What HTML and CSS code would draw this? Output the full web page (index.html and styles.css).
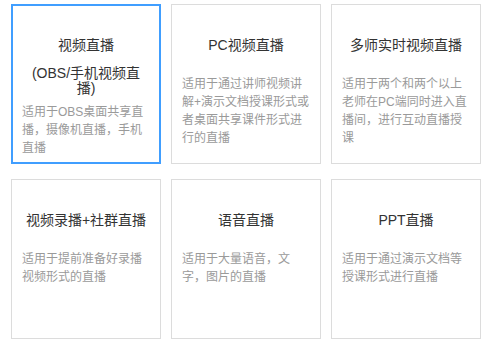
FILE: index.html
```html
<!DOCTYPE html>
<html>
<head>
<meta charset="utf-8" />
<title>直播类型</title>
<link rel="stylesheet" href="styles.css">
</head>
<body>
	<ul class="live_types">
		<li class="live_item active">
			<h3 class="live_title has_sub">视频直播<span class="live_sub">(OBS/手机视频直播)</span></h3>
			<p class="live_desc">适用于OBS桌面共享直播，摄像机直播，手机直播</p>
		</li>
		<li class="live_item">
			<h3 class="live_title">PC视频直播</h3>
			<p class="live_desc">适用于通过讲师视频讲解+演示文档授课形式或者桌面共享课件形式进行的直播</p>
		</li>
		<li class="live_item">
			<h3 class="live_title">多师实时视频直播</h3>
			<p class="live_desc">适用于两个和两个以上老师在PC端同时进入直播间，进行互动直播授课</p>
		</li>
		<li class="live_item">
			<h3 class="live_title">视频录播+社群直播</h3>
			<p class="live_desc">适用于提前准备好录播视频形式的直播</p>
		</li>
		<li class="live_item">
			<h3 class="live_title">语音直播</h3>
			<p class="live_desc">适用于大量语音，文字，图片的直播</p>
		</li>
		<li class="live_item">
			<h3 class="live_title">PPT直播</h3>
			<p class="live_desc">适用于通过演示文档等授课形式进行直播</p>
		</li>
	</ul>
</body>
</html>
```

FILE: styles.css
```css
html, body, ul, li, h3, p {
	padding: 0;
	margin: 0;
}

body {
	background: #fff;
	font-family: "Liberation Sans", "Noto Sans CJK SC", sans-serif;
	font-size: 12px;
}

li {
	list-style: none;
}

.live_types {
	display: flex;
	flex-wrap: wrap;
	width: 470px;
	column-gap: 10px;
	row-gap: 15px;
	padding: 4px 0 0 11px;
}

.live_item {
	width: 150px;
	height: 160px;
	box-sizing: border-box;
	border: 1px solid #dcdcdc;
	padding: 30px 10px 0 10px;
	cursor: pointer;
}

/*选中*/
.live_item.active {
	border: 2px solid #409eff;
	padding: 29px 9px 0 9px;
}

.live_title {
	font-size: 14px;
	font-weight: normal;
	line-height: 20px;
	color: #333;
	text-align: center;
	margin-bottom: 20px;
}

.live_title.has_sub {
	margin-bottom: 7px;
}

.live_sub {
	display: block;
	margin-top: 11px;
	padding: 0 6px;
	line-height: 15px;
}

.live_desc {
	font-size: 12px;
	line-height: 18px;
	color: #9a9a9a;
}
```
